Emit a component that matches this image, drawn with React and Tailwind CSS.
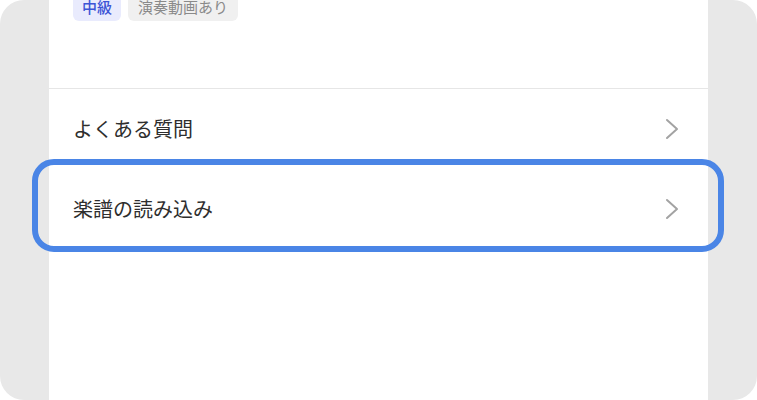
function Chevron() {
  return (
    <svg width="16" height="22" viewBox="0 0 16 22" fill="none" className="shrink-0">
      <path d="M3 2l10 9-10 9" stroke="#a3a3a3" strokeWidth="2" strokeLinecap="round" strokeLinejoin="round" />
    </svg>
  );
}

function MenuRow({ label, focused }) {
  return (
    <div className="relative flex h-[80px] items-center justify-between pl-[24px] pr-[28px]">
      <span className="text-[20px] text-[#2e2e2e]">{label}</span>
      <Chevron />
      {focused && (
        <div className="pointer-events-none absolute -left-[17px] -right-[16px] -top-[10px] -bottom-[3px] rounded-[22px] border-[6px] border-[#4a85e6]" />
      )}
    </div>
  );
}

export default function App() {
  return (
    <div
      className="h-[400px] w-[757px] bg-white"
      style={{ fontFamily: '"Noto Sans CJK JP", "Noto Sans", sans-serif' }}
    >
      <div className="flex h-full justify-center overflow-hidden rounded-[24px] bg-[#e8e8e8]">
        <div className="h-full w-[659px] bg-white">
          <div className="-mt-[6px] flex gap-[7px] border-b border-[#e6e6e6] pl-[24px] pb-[67px]">
            <span className="flex h-[27px] items-center rounded-[6px] bg-[#e9ebfd] px-[9px] text-[15px] font-medium text-[#3d55d6]">
              中級
            </span>
            <span className="flex h-[27px] items-center rounded-[6px] bg-[#f0f0f0] px-[10px] text-[15px] text-[#8a8a8a]">
              演奏動画あり
            </span>
          </div>
          <MenuRow label="よくある質問" />
          <MenuRow label="楽譜の読み込み" focused />
        </div>
      </div>
    </div>
  );
}
